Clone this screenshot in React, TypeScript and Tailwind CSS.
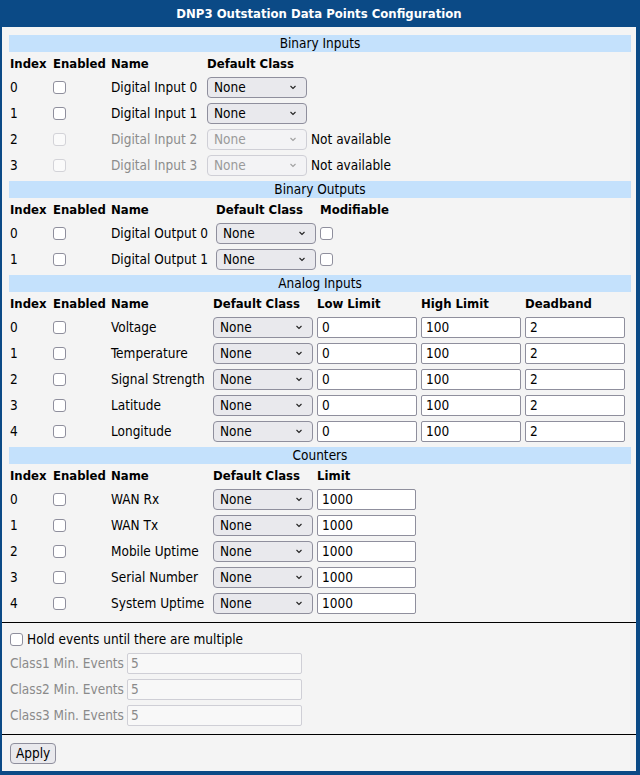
import React from 'react'

function Chevron({ disabled }: { disabled?: boolean }) {
  return (
    <svg width="8" height="5" viewBox="0 0 8 5" className="shrink-0">
      <path
        d="M1.5 1 L4 3.5 L6.5 1"
        fill="none"
        stroke={disabled ? '#a0a0a0' : '#222'}
        strokeWidth="1.1"
      />
    </svg>
  )
}

function Select({ disabled }: { disabled?: boolean }) {
  return (
    <div
      className={
        disabled
          ? 'flex h-[21px] w-[100px] shrink-0 items-center justify-between rounded-[4px] border border-[#cfcfd6] bg-[#f3f3f5] pl-[6px] pr-[9px] text-[#9a9a9a]'
          : 'flex h-[21px] w-[100px] shrink-0 items-center justify-between rounded-[4px] border border-[#8f8f9d] bg-[#e9e9ed] pl-[6px] pr-[9px] text-black'
      }
    >
      <span>None</span>
      <Chevron disabled={disabled} />
    </div>
  )
}

function Check({ disabled }: { disabled?: boolean }) {
  return (
    <span
      className={
        disabled
          ? 'block h-[13px] w-[13px] shrink-0 rounded-[3px] border border-[#d3d3d8] bg-[#fafafa]'
          : 'block h-[13px] w-[13px] shrink-0 rounded-[3px] border border-[#8f8f9d] bg-white'
      }
    />
  )
}

function TextBox({ value, w = 'w-[100px]' }: { value: string; w?: string }) {
  return (
    <div
      className={`flex h-[21px] ${w} shrink-0 items-center rounded-[2px] border border-[#8f8f9d] bg-white px-[4px] text-black`}
    >
      {value}
    </div>
  )
}

function Band({ title }: { title: string }) {
  return (
    <div className="flex h-[17px] items-center justify-center bg-[#c4e1fc] text-black">
      {title}
    </div>
  )
}

function HeadRow({ cells }: { cells: [string, string][] }) {
  return (
    <div className="flex h-[22px] items-center pl-px pt-px text-[13px] font-bold">
      {cells.map(([label, w]) => (
        <div key={label} className={`${w} shrink-0`}>
          {label}
        </div>
      ))}
    </div>
  )
}

const binaryInputs = [0, 1, 2, 3]
const binaryOutputs = [0, 1]
const analog = ['Voltage', 'Temperature', 'Signal Strength', 'Latitude', 'Longitude']
const counters = ['WAN Rx', 'WAN Tx', 'Mobile Uptime', 'Serial Number', 'System Uptime']

export default function App() {
  return (
    <div className="h-[775px] w-[640px] bg-[#0b4a86] pb-[4px] pl-[2px] pr-[4px] font-['DejaVu_Sans_Condensed','DejaVu_Sans',sans-serif] text-[13.5px] leading-[15px] text-black">
      <div className="flex h-[27px] items-center justify-center text-[13px] font-bold text-white">
        DNP3 Outstation Data Points Configuration
      </div>
      <div className="flex h-[744px] flex-col bg-[#f4f4f4]">
        <div className="pl-[7px] pr-[5px] pt-[8px]">
          <Band title="Binary Inputs" />
          <HeadRow
            cells={[
              ['Index', 'w-[43px]'],
              ['Enabled', 'w-[58px]'],
              ['Name', 'w-[96px]'],
              ['Default Class', 'w-[100px]'],
            ]}
          />
          {binaryInputs.map((i) => {
            const off = i > 1
            return (
              <div key={i} className="flex h-[26px] items-center pl-px">
                <div className="w-[43px] shrink-0">{i}</div>
                <div className="w-[58px] shrink-0">
                  <Check disabled={off} />
                </div>
                <div className={`w-[96px] shrink-0 ${off ? 'text-[#8c8c8c]' : ''}`}>
                  Digital Input {i}
                </div>
                <Select disabled={off} />
                {off && <div className="ml-[4px]">Not available</div>}
              </div>
            )
          })}

          <div className="mt-[3px]">
            <Band title="Binary Outputs" />
          </div>
          <HeadRow
            cells={[
              ['Index', 'w-[43px]'],
              ['Enabled', 'w-[58px]'],
              ['Name', 'w-[105px]'],
              ['Default Class', 'w-[104px]'],
              ['Modifiable', 'w-[80px]'],
            ]}
          />
          {binaryOutputs.map((i) => (
            <div key={i} className="flex h-[26px] items-center pl-px">
              <div className="w-[43px] shrink-0">{i}</div>
              <div className="w-[58px] shrink-0">
                <Check />
              </div>
              <div className="w-[105px] shrink-0">Digital Output {i}</div>
              <Select />
              <div className="ml-[4px]">
                <Check />
              </div>
            </div>
          ))}

          <div className="mt-[3px]">
            <Band title="Analog Inputs" />
          </div>
          <HeadRow
            cells={[
              ['Index', 'w-[43px]'],
              ['Enabled', 'w-[58px]'],
              ['Name', 'w-[102px]'],
              ['Default Class', 'w-[104px]'],
              ['Low Limit', 'w-[104px]'],
              ['High Limit', 'w-[104px]'],
              ['Deadband', 'w-[100px]'],
            ]}
          />
          {analog.map((name, i) => (
            <div key={name} className="flex h-[26px] items-center gap-[4px] pl-px">
              <div className="-mr-[4px] w-[43px] shrink-0">{i}</div>
              <div className="-mr-[4px] w-[58px] shrink-0">
                <Check />
              </div>
              <div className="-mr-[4px] w-[102px] shrink-0">{name}</div>
              <Select />
              <TextBox value="0" />
              <TextBox value="100" />
              <TextBox value="2" />
            </div>
          ))}

          <div className="mt-[3px]">
            <Band title="Counters" />
          </div>
          <HeadRow
            cells={[
              ['Index', 'w-[43px]'],
              ['Enabled', 'w-[58px]'],
              ['Name', 'w-[102px]'],
              ['Default Class', 'w-[104px]'],
              ['Limit', 'w-[100px]'],
            ]}
          />
          {counters.map((name, i) => (
            <div key={name} className="flex h-[26px] items-center gap-[4px] pl-px">
              <div className="-mr-[4px] w-[43px] shrink-0">{i}</div>
              <div className="-mr-[4px] w-[58px] shrink-0">
                <Check />
              </div>
              <div className="-mr-[4px] w-[102px] shrink-0">{name}</div>
              <Select />
              <TextBox value="1000" w="w-[99px]" />
            </div>
          ))}
        </div>

        <div className="mt-[6px] border-t border-black px-[8px] pt-[8px]">
          <div className="flex h-[17px] items-center gap-[4px]">
            <Check />
            <span>Hold events until there are multiple</span>
          </div>
          {['Class1', 'Class2', 'Class3'].map((c) => (
            <div key={c} className="mt-[5px] flex h-[21px] items-center">
              <div className="w-[117px] shrink-0 text-[#8a8a8a]">{c} Min. Events</div>
              <div className="flex h-[21px] w-[175px] items-center rounded-[2px] border border-[#cfcfd6] bg-[#f8f8f8] px-[3px] text-[#8a8a8a]">
                5
              </div>
            </div>
          ))}
        </div>

        <div className="mt-[8px] border-t border-black px-[8px] pt-[8px]">
          <button className="h-[21px] rounded-[4px] border border-[#8f8f9d] bg-[#e9e9ed] px-[5px] text-black">
            Apply
          </button>
        </div>
      </div>
    </div>
  )
}
